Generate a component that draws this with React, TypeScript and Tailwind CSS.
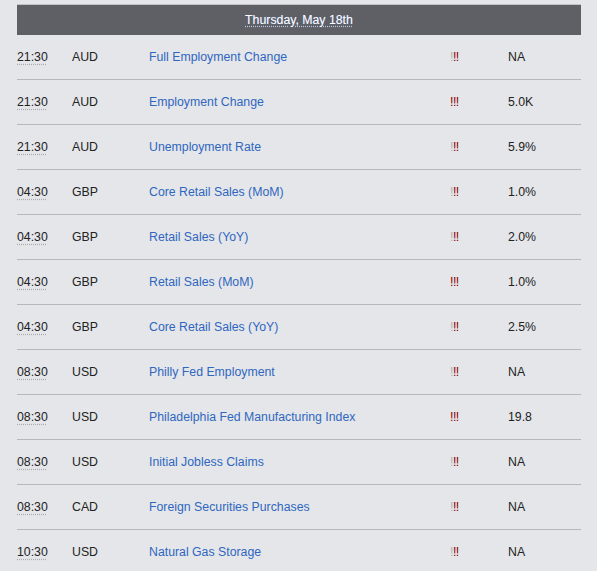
import React from "react";

type Row = { time: string; cur: string; event: string; imp: number; actual: string };

const rows: Row[] = [
  { time: "21:30", cur: "AUD", event: "Full Employment Change", imp: 2, actual: "NA" },
  { time: "21:30", cur: "AUD", event: "Employment Change", imp: 3, actual: "5.0K" },
  { time: "21:30", cur: "AUD", event: "Unemployment Rate", imp: 2, actual: "5.9%" },
  { time: "04:30", cur: "GBP", event: "Core Retail Sales (MoM)", imp: 2, actual: "1.0%" },
  { time: "04:30", cur: "GBP", event: "Retail Sales (YoY)", imp: 2, actual: "2.0%" },
  { time: "04:30", cur: "GBP", event: "Retail Sales (MoM)", imp: 3, actual: "1.0%" },
  { time: "04:30", cur: "GBP", event: "Core Retail Sales (YoY)", imp: 2, actual: "2.5%" },
  { time: "08:30", cur: "USD", event: "Philly Fed Employment", imp: 2, actual: "NA" },
  { time: "08:30", cur: "USD", event: "Philadelphia Fed Manufacturing Index", imp: 3, actual: "19.8" },
  { time: "08:30", cur: "USD", event: "Initial Jobless Claims", imp: 2, actual: "NA" },
  { time: "08:30", cur: "CAD", event: "Foreign Securities Purchases", imp: 2, actual: "NA" },
  { time: "10:30", cur: "USD", event: "Natural Gas Storage", imp: 2, actual: "NA" },
];

function Imp({ level }: { level: number }) {
  return (
    <span className="tracking-[-0.5px]">
      {[0, 1, 2].map((i) => (
        <span key={i} className={i < 3 - level ? "text-[#b4b4b4]" : "text-[#8b0000]"}>
          !
        </span>
      ))}
    </span>
  );
}

export default function App() {
  return (
    <div
      className="min-h-[571px] w-[597px] overflow-hidden bg-[#e5e6ea] pt-[4px] text-[12.3px] text-[#222]"
      style={{ fontFamily: '"Liberation Sans", Arial, sans-serif' }}
    >
      <div className="mx-[17px] w-[564px]">
        <div className="border-t border-[#c2c3c7] bg-[#5f6065] h-[31px] flex items-center justify-center">
          <span className="text-white underline decoration-dotted decoration-white/50 underline-offset-2 [text-shadow:0_0_1px_rgba(120,160,255,0.6)]">
            Thursday, May 18th
          </span>
        </div>
        {rows.map((r, i) => (
          <div
            key={i}
            className={`flex h-[45px] items-center ${i < rows.length - 1 ? "border-b border-[#b7b8bb]" : ""}`}
          >
            <span className="w-[55px] shrink-0">
              <span className="underline decoration-dotted decoration-[#aaa] underline-offset-[3px]">{r.time}</span>
            </span>
            <span className="w-[77px] shrink-0">{r.cur}</span>
            <span className="w-[301px] shrink-0 text-[#2f66c0]">{r.event}</span>
            <span className="w-[58px] shrink-0">
              <Imp level={r.imp} />
            </span>
            <span>{r.actual}</span>
          </div>
        ))}
      </div>
    </div>
  );
}
